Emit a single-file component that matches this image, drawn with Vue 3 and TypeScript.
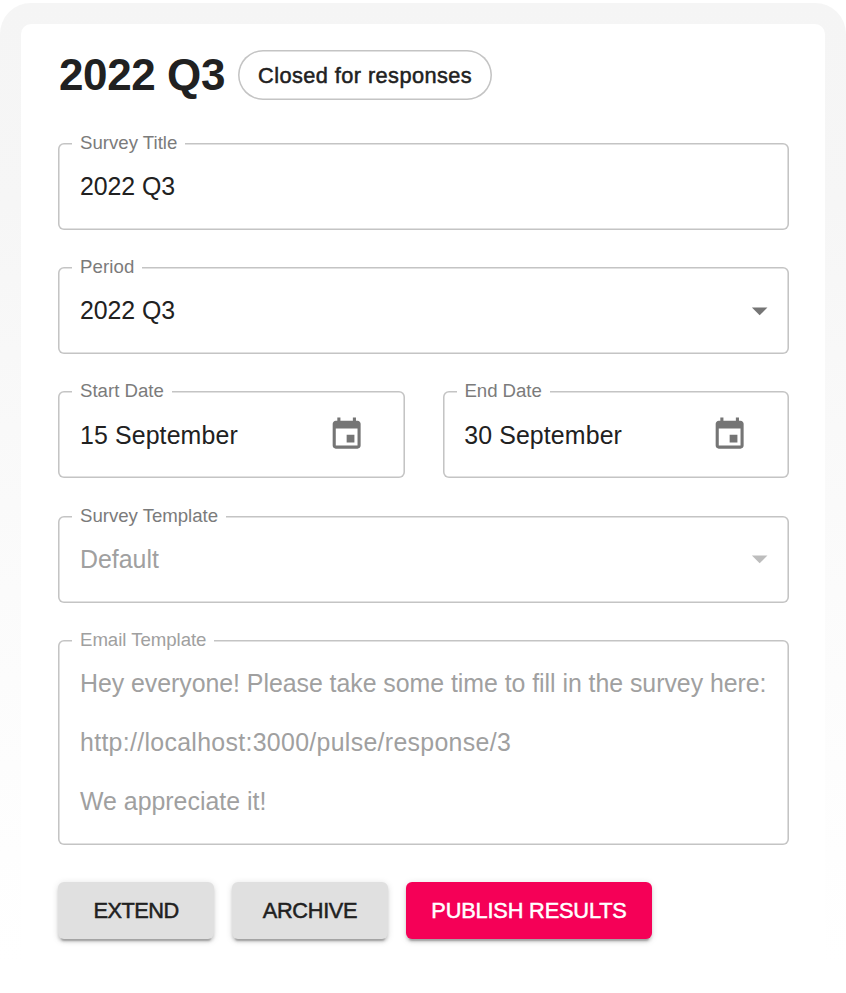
<script setup lang="ts">
import { ref } from 'vue'

interface DateField {
  label: string
  value: string
  kind: string
}

interface MessageLine {
  text: string
  kind: string
}

const title = ref('2022 Q3')
const dates: DateField[] = [
  { label: 'Start Date', value: '15 September', kind: 'start' },
  { label: 'End Date', value: '30 September', kind: 'end' },
]
const message: MessageLine[] = [
  { text: 'Hey everyone! Please take some time to fill in the survey here:', kind: 'greeting' },
  { text: 'http://localhost:3000/pulse/response/3', kind: 'link' },
  { text: 'We appreciate it!', kind: 'thanks' },
]
</script>

<template>
  <div class="frame">
    <main class="card">
      <header class="head">
        <h1>{{ title }}</h1>
        <span class="chip">Closed for responses</span>
      </header>

      <form class="fields" @submit.prevent>
        <div class="field">
          <label class="survey-title">Survey Title</label>
          <div class="value quarter">{{ title }}</div>
        </div>

        <div class="field">
          <label class="period">Period</label>
          <div class="value quarter">{{ title }}</div>
          <svg class="arrow" viewBox="0 0 24 24"><path d="M7 10l5 5 5-5z" /></svg>
        </div>

        <div class="dates">
          <div v-for="d in dates" :key="d.label" class="field" :class="d.kind">
            <label>{{ d.label }}</label>
            <div class="value day">{{ d.value }}</div>
            <svg class="calendar" viewBox="0 0 24 24">
              <path d="M17 12h-5v5h5v-5zM16 1v2H8V1H6v2H5c-1.11 0-1.99.9-1.99 2L3 19c0 1.1.89 2 2 2h14c1.1 0 2-.9 2-2V5c0-1.1-.9-2-2-2h-1V1h-2zm3 18H5V8h14v11z" />
            </svg>
          </div>
        </div>

        <div class="field disabled">
          <label class="template">Survey Template</label>
          <div class="value default">Default</div>
          <svg class="arrow" viewBox="0 0 24 24"><path d="M7 10l5 5 5-5z" /></svg>
        </div>

        <div class="field disabled message">
          <label class="email">Email Template</label>
          <div v-for="line in message" :key="line.kind" class="value" :class="line.kind">{{ line.text }}</div>
        </div>
      </form>

      <footer class="actions">
        <button class="extend" type="button">EXTEND</button>
        <button class="archive" type="button">ARCHIVE</button>
        <button class="publish" type="button">PUBLISH RESULTS</button>
      </footer>
    </main>
  </div>
</template>

<style>
body {
  background: #fff;
}
</style>

<style scoped>
.frame {
  box-sizing: border-box;
  width: 846px;
  height: 990px;
  margin-top: 3px;
  padding: 21px 21px 0;
  border-radius: 31px 31px 0 0;
  background: linear-gradient(#f5f5f5 0, #f6f6f6 200px, #fafafa 500px, #fefefe 850px, #fff 960px);
  font-family: 'Liberation Sans', Arial, sans-serif;
  color: #212121;
}
.card {
  box-sizing: border-box;
  height: 969px;
  padding: 26px 36px 0 37px;
  border-radius: 10px;
  background: #fff;
}
.head {
  display: flex;
  align-items: center;
  height: 50px;
}
h1 {
  box-sizing: border-box;
  width: 180px;
  margin: 0;
  padding-left: 1px;
  font-size: 44px;
  line-height: 50px;
  letter-spacing: -0.4px;
  white-space: nowrap;
}
.chip {
  box-sizing: border-box;
  width: 254px;
  height: 50px;
  padding: 1px 0 0 20px;
  border-radius: 25px;
  box-shadow: inset 0 0 0 1.55px #c4c4c4;
  font-size: 21.75px;
  line-height: 50px;
  letter-spacing: 0.43px;
  white-space: nowrap;
  -webkit-text-stroke: 0.5px currentColor;
}
.fields {
  display: flex;
  flex-direction: column;
  gap: 37.3px;
  margin-top: 42.7px;
}
.field {
  position: relative;
  box-sizing: border-box;
  height: 87px;
  padding: 29px 22px 0;
  border-radius: 6px;
  box-shadow: inset 0 0 0 1.55px #c4c4c4;
}
.dates {
  display: grid;
  grid-template-columns: 347px 346px;
  justify-content: space-between;
}
label {
  position: absolute;
  top: -12px;
  left: 14px;
  padding: 0 8px;
  background: #fff;
  color: #7b7b7b;
  font-size: 18.65px;
  line-height: 24px;
  letter-spacing: 0;
  white-space: nowrap;
}
.period {
  letter-spacing: 0.1px;
}
.end label {
  padding-left: 7.5px;
  letter-spacing: -0.06px;
}
.template {
  letter-spacing: -0.03px;
}
.email {
  letter-spacing: -0.05px;
}
.value {
  font-size: 24.9px;
  line-height: 29.5px;
  letter-spacing: 0;
  white-space: pre;
}
.quarter {
  letter-spacing: -0.08px;
}
.day {
  padding-top: 0.5px;
  letter-spacing: 0.12px;
}
.end .day {
  margin-left: -0.8px;
}
.disabled .value,
.disabled .email {
  color: #a0a0a0;
}
.message {
  display: flex;
  flex-direction: column;
  gap: 29.5px;
  height: 205px;
}
.greeting {
  letter-spacing: -0.04px;
}
.link {
  letter-spacing: 0.31px;
}
svg {
  position: absolute;
  width: 37.3px;
  height: 37.3px;
  fill: #757575;
}
.arrow {
  top: 25px;
  right: 10.5px;
}
.disabled .arrow {
  top: 24.4px;
  fill: #bdbdbd;
}
.calendar {
  top: 25px;
  right: 40px;
}
.end .calendar {
  right: 40.3px;
}
.actions {
  display: flex;
  gap: 18px;
  margin-top: 37px;
}
button {
  width: 156px;
  height: 57px;
  padding: 1px 0 0;
  border: 0;
  border-radius: 6px;
  background: #e0e0e0;
  box-shadow: 0 4.6px 1.5px -3px rgba(0, 0, 0, 0.2), 0 3px 3px 0 rgba(0, 0, 0, 0.14), 0 1.5px 7.7px 0 rgba(0, 0, 0, 0.12);
  color: #212121;
  font-family: inherit;
  font-size: 21.75px;
  line-height: 56px;
  white-space: nowrap;
  -webkit-text-stroke: 0.5px currentColor;
}
.extend {
  letter-spacing: -0.5px;
}
.archive {
  letter-spacing: -0.3px;
}
.publish {
  width: 246px;
  background: #f50057;
  color: #fff;
  letter-spacing: -0.16px;
}
</style>
